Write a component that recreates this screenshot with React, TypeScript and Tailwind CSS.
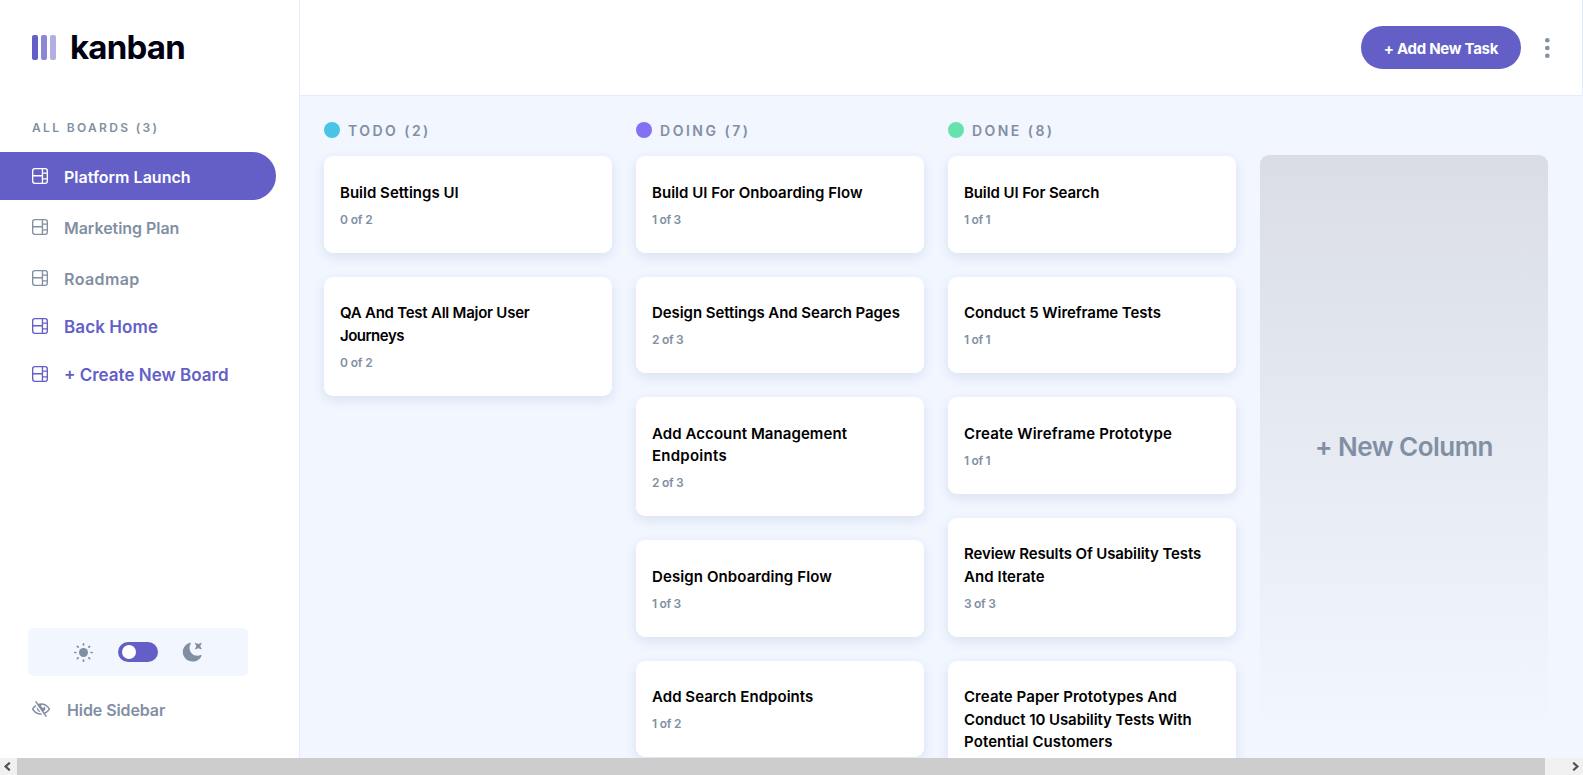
type TitleLine = { text: string; tracking: string };
type Task = { lines: TitleLine[]; progress?: string; progressTracking?: string };
type ColumnData = { name: string; dot: string; tracking: string; tasks: Task[] };

const columns: ColumnData[] = [
  {
    name: "TODO (2)",
    dot: "bg-[#49c4e5]",
    tracking: "tracking-[2.45px]",
    tasks: [
      { lines: [{ text: "Build Settings UI", tracking: "tracking-[0.01px]" }], progress: "0 of 2", progressTracking: "tracking-[-0.15px]" },
      {
        lines: [
          { text: "QA And Test All Major User", tracking: "tracking-[-0.24px]" },
          { text: "Journeys", tracking: "tracking-[-0.5px]" },
        ],
        progress: "0 of 2",
        progressTracking: "tracking-[-0.15px]",
      },
    ],
  },
  {
    name: "DOING (7)",
    dot: "bg-[#8471f2]",
    tracking: "tracking-[2.52px]",
    tasks: [
      { lines: [{ text: "Build UI For Onboarding Flow", tracking: "tracking-[0.03px]" }], progress: "1 of 3", progressTracking: "tracking-[-0.3px]" },
      { lines: [{ text: "Design Settings And Search Pages", tracking: "tracking-[-0.07px]" }], progress: "2 of 3", progressTracking: "tracking-[-0.3px]" },
      {
        lines: [
          { text: "Add Account Management", tracking: "tracking-[0.08px]" },
          { text: "Endpoints", tracking: "tracking-[0.25px]" },
        ],
        progress: "2 of 3",
        progressTracking: "tracking-[-0.3px]",
      },
      { lines: [{ text: "Design Onboarding Flow", tracking: "tracking-[0.1px]" }], progress: "1 of 3", progressTracking: "tracking-[-0.3px]" },
      { lines: [{ text: "Add Search Endpoints", tracking: "tracking-[0.04px]" }], progress: "1 of 2", progressTracking: "tracking-[-0.22px]" },
    ],
  },
  {
    name: "DONE (8)",
    dot: "bg-[#67e2ae]",
    tracking: "tracking-[2.45px]",
    tasks: [
      { lines: [{ text: "Build UI For Search", tracking: "tracking-[-0.1px]" }], progress: "1 of 1", progressTracking: "tracking-[-0.3px]" },
      { lines: [{ text: "Conduct 5 Wireframe Tests", tracking: "tracking-[-0.06px]" }], progress: "1 of 1", progressTracking: "tracking-[-0.3px]" },
      { lines: [{ text: "Create Wireframe Prototype", tracking: "tracking-[0.17px]" }], progress: "1 of 1", progressTracking: "tracking-[-0.3px]" },
      {
        lines: [
          { text: "Review Results Of Usability Tests", tracking: "tracking-[-0.11px]" },
          { text: "And Iterate", tracking: "tracking-[0.06px]" },
        ],
        progress: "3 of 3",
        progressTracking: "tracking-[-0.3px]",
      },
      {
        lines: [
          { text: "Create Paper Prototypes And", tracking: "tracking-[0.07px]" },
          { text: "Conduct 10 Usability Tests With", tracking: "tracking-[-0.07px]" },
          { text: "Potential Customers", tracking: "tracking-[0.1px]" },
        ],
      },
    ],
  },
];

function BoardIcon() {
  return (
    <svg className="size-4 shrink-0" viewBox="0 0 16 16" fill="currentColor">
      <path d="M0 2.889A2.889 2.889 0 0 1 2.889 0H13.11A2.889 2.889 0 0 1 16 2.889V13.11A2.888 2.888 0 0 1 13.111 16H2.89A2.889 2.889 0 0 1 0 13.111V2.89Zm1.333 5.555v4.667c0 .859.697 1.556 1.556 1.556h6.889V8.444H1.333Zm8.445-1.333V1.333h-6.89A1.556 1.556 0 0 0 1.334 2.89V7.11h8.445Zm4.889-1.333H11.11v4.444h3.556V5.778Zm0 5.778H11.11v3.11h2a1.556 1.556 0 0 0 1.556-1.555v-1.555Zm0-7.112V2.89a1.555 1.555 0 0 0-1.556-1.556h-2v3.111h3.556Z" />
    </svg>
  );
}

function SunIcon() {
  return (
    <svg className="size-[19px]" viewBox="0 0 19 19" fill="currentColor">
      <circle cx="9.5" cy="9.5" r="4.5" />
      {[0, 45, 90, 135, 180, 225, 270, 315].map((angle) => (
        <rect key={angle} x="8.65" y="0" width="1.7" height="2.7" rx="0.8" transform={`rotate(${angle} 9.5 9.5)`} />
      ))}
    </svg>
  );
}

function MoonIcon() {
  return (
    <svg className="size-5" viewBox="0 0 16 16" fill="currentColor">
      <path d="M6.474.682c.434-.11.718.406.481.78A6.067 6.067 0 0 0 6.01 4.72c0 3.418 2.827 6.187 6.314 6.187.89.002 1.77-.182 2.584-.54.408-.18.894.165.724.57-1.16 2.775-3.944 4.73-7.194 4.73-4.292 0-7.771-3.41-7.771-7.615 0-3.541 2.466-6.518 5.807-7.37Zm8.433.07c.442-.294.969.232.674.674l-.525.787a1.943 1.943 0 0 0 0 2.157l.525.788c.295.441-.232.968-.674.673l-.787-.525a1.943 1.943 0 0 0-2.157 0l-.786.525c-.442.295-.97-.232-.675-.673l.525-.788a1.943 1.943 0 0 0 0-2.157l-.525-.787c-.295-.442.232-.968.674-.673l.787.525a1.943 1.943 0 0 0 2.157 0l.787-.525Z" />
    </svg>
  );
}

function HideIcon() {
  return (
    <svg className="h-4 w-[18px] shrink-0" viewBox="0 0 18 16" fill="currentColor">
      <path d="M8.522 11.223a4.252 4.252 0 0 1-3.654-5.22l3.654 5.22ZM9 12.25A8.685 8.685 0 0 1 1.5 8a8.612 8.612 0 0 1 2.76-2.864l-.86-1.23A10.112 10.112 0 0 0 .208 7.238a1.5 1.5 0 0 0 0 1.524A10.187 10.187 0 0 0 9 13.75c.414 0 .828-.025 1.239-.074l-1-1.43A8.88 8.88 0 0 1 9 12.25Zm8.792-3.488a10.14 10.14 0 0 1-4.486 4.046l1.504 2.148a.375.375 0 0 1-.092.523l-.648.453a.375.375 0 0 1-.523-.092L3.19 1.044A.375.375 0 0 1 3.282.52L3.93.068a.375.375 0 0 1 .523.092l1.735 2.479A10.308 10.308 0 0 1 9 2.25c3.746 0 7.031 2 8.792 4.988a1.5 1.5 0 0 1 0 1.524ZM16.5 8a8.674 8.674 0 0 0-6.755-4.219A1.75 1.75 0 1 0 12.75 5v-.001a4.25 4.25 0 0 1-1.154 5.366l.834 1.192A8.641 8.641 0 0 0 16.5 8Z" />
    </svg>
  );
}

function BoardLink({ label, className }: { label: string; className: string }) {
  return (
    <a className={`flex h-12 items-center gap-4 pl-8 ${className}`}>
      <BoardIcon />
      <span className="pt-0.5 leading-5">{label}</span>
    </a>
  );
}

function Sidebar() {
  return (
    <aside className="flex w-[300px] shrink-0 flex-col border-r border-[#e4ebfa] bg-white">
      <div className="flex h-[95px] items-center gap-[13px] pl-8">
        <div className="flex gap-[3px]">
          <span className="h-[25px] w-1.5 rounded-xs bg-[#635fc7]" />
          <span className="h-[25px] w-1.5 rounded-xs bg-[#635fc7]/75" />
          <span className="h-[25px] w-1.5 rounded-xs bg-[#635fc7]/50" />
        </div>
        <span className="pb-0.5 pl-px text-[33px] leading-[36px] font-bold tracking-[-0.8px] text-[#000112]">kanban</span>
      </div>
      <h2 className="mt-[25px] pl-8 text-xs leading-4 font-semibold tracking-[2.34px] text-[#828fa3]">ALL BOARDS (3)</h2>
      <nav className="mt-4 flex flex-col text-[#828fa3]">
        <BoardLink label="Platform Launch" className="mr-[23px] rounded-r-full bg-[#635fc7] font-semibold tracking-[0.02px] text-white" />
        <BoardLink label="Marketing Plan" className="mt-[3px] font-semibold tracking-[-0.04px]" />
        <BoardLink label="Roadmap" className="mt-[3px] font-semibold tracking-[0.4px]" />
        <BoardLink label="Back Home" className="text-[17px] font-semibold tracking-[0.09px] text-[#635fc7]" />
        <BoardLink label="+ Create New Board" className="text-[17px] font-semibold text-[#635fc7]" />
      </nav>
      <div className="mt-auto ml-7 flex h-12 w-[220px] items-center justify-center rounded-[5px] bg-[#f1f6ff] text-[#828fa3]">
        <SunIcon />
        <div className="mr-6 ml-[25px] flex h-5 w-10 items-center rounded-full bg-[#635fc7] pl-1">
          <span className="size-3.5 rounded-full bg-white" />
        </div>
        <MoonIcon />
      </div>
      <div className="mt-[23px] mb-[39px] flex h-5 items-center gap-[17px] pl-8 text-[#828fa3]">
        <HideIcon />
        <span className="pt-0.5 leading-5 font-semibold tracking-[-0.09px]">Hide Sidebar</span>
      </div>
    </aside>
  );
}

function TaskCard({ task }: { task: Task }) {
  return (
    <article className="rounded-[9px] bg-white px-4 pt-[25.5px] pb-6 shadow-[0_4px_12px_rgba(54,78,126,0.12)]">
      <h3 className="text-[15px] leading-[22.5px] font-semibold text-black">
        {task.lines.map((line) => (
          <span key={line.text} className={`block whitespace-nowrap ${line.tracking}`}>
            {line.text}
          </span>
        ))}
      </h3>
      {task.progress && (
        <p className={`mt-[6.5px] text-xs leading-[18px] font-semibold text-[#828fa3] ${task.progressTracking}`}>{task.progress}</p>
      )}
    </article>
  );
}

function Column({ column }: { column: ColumnData }) {
  return (
    <section className="w-72 shrink-0">
      <div className="flex h-4 items-center gap-2">
        <span className={`size-4 rounded-full ${column.dot}`} />
        <h2 className={`pt-0.5 text-sm leading-4 font-semibold text-[#828fa3] ${column.tracking}`}>{column.name}</h2>
      </div>
      <div className="mt-[18px] flex flex-col gap-6">
        {column.tasks.map((task) => (
          <TaskCard key={task.lines[0].text} task={task} />
        ))}
      </div>
    </section>
  );
}

function Header() {
  return (
    <header className="flex h-24 shrink-0 items-center justify-end border-r border-b border-[#e4ebfa] bg-white pr-8">
      <button className="flex h-[43px] w-40 items-center justify-center rounded-full bg-[#635fc7] pt-0.5 text-[15px] leading-5 font-bold tracking-[-0.28px] text-white">
        <span className="pt-px">+ Add New Task</span>
      </button>
      <svg className="ml-6 h-5 w-[5px]" viewBox="0 0 5 20" fill="#828fa3">
        <circle cx="2.308" cy="2.308" r="2.308" />
        <circle cx="2.308" cy="10" r="2.308" />
        <circle cx="2.308" cy="17.692" r="2.308" />
      </svg>
    </header>
  );
}

function Scrollbar() {
  return (
    <div className="flex h-[17px] shrink-0 items-center justify-between bg-[#f0f0f0]">
      <div className="flex w-[17px] justify-center pr-0.5">
        <svg className="size-[9px]" viewBox="0 0 9 9" fill="none" stroke="#505050" strokeWidth="2.2">
          <path d="M6.8 0.7 2.6 4.5 6.8 8.3" />
        </svg>
      </div>
      <div className="h-full flex-1 bg-[#cdcdcd]" />
      <div className="flex w-[38px] justify-end pr-[3px]">
        <svg className="size-[9px]" viewBox="0 0 9 9" fill="none" stroke="#505050" strokeWidth="2.2">
          <path d="M2.2 0.7 6.4 4.5 2.2 8.3" />
        </svg>
      </div>
    </div>
  );
}

export default function App() {
  return (
    <div className="flex h-screen flex-col overflow-hidden bg-[#f1f6ff] font-['Inter',sans-serif]">
      <div className="flex min-h-0 flex-1">
        <Sidebar />
        <div className="flex min-w-0 flex-1 flex-col">
          <Header />
          <main className="flex min-h-0 flex-1 gap-6 overflow-hidden pt-[26px] pl-6">
            {columns.map((column) => (
              <Column key={column.name} column={column} />
            ))}
            <button className="mt-[33px] flex h-[576px] w-72 shrink-0 items-center justify-center rounded-[9px] bg-linear-to-b from-[#dadde6] via-[#e5eaf3] to-[#f1f6ff] pt-1.5 text-[26px] font-semibold tracking-[-0.53px] text-[#828fa3]">
              + New Column
            </button>
          </main>
        </div>
      </div>
      <Scrollbar />
    </div>
  );
}
